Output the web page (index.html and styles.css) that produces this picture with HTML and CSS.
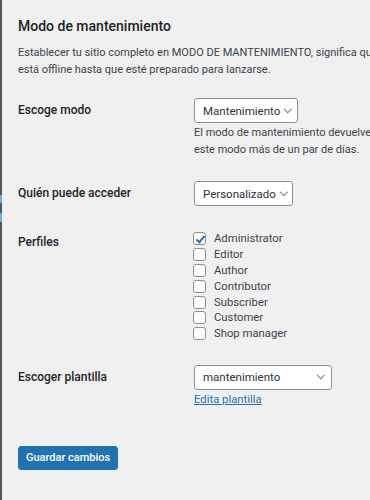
FILE: index.html
```html
<!DOCTYPE html>
<html lang="es">
<head>
    <meta charset="UTF-8">
    <title>Modo de mantenimiento</title>
    <link rel="stylesheet" href="styles.css">
</head>
<body>
    <div class="edge"></div>

    <div class="wrap">
        <h2>Modo de mantenimiento</h2>
        <p class="intro">Establecer tu sitio completo en MODO DE MANTENIMIENTO, significa que el sitio<br>está offline hasta que esté preparado para lanzarse.</p>

        <form class="settings">
            <div class="row">
                <label class="row-label">Escoge modo</label>
                <div class="row-field">
                    <div class="select">Mantenimiento <span class="chevron"></span></div>
                    <p class="description">El modo de mantenimiento devuelve un código 503, no es recomendable usar<br>este modo más de un par de días.</p>
                </div>
            </div>

            <div class="row">
                <label class="row-label">Quién puede acceder</label>
                <div class="row-field">
                    <div class="select">Personalizado <span class="chevron"></span></div>
                </div>
            </div>

            <div class="row row-roles">
                <label class="row-label">Perfiles</label>
                <div class="row-field">
                    <ul class="roles">
                        <li><span class="check checked"></span>Administrator</li>
                        <li><span class="check"></span>Editor</li>
                        <li><span class="check"></span>Author</li>
                        <li><span class="check"></span>Contributor</li>
                        <li><span class="check"></span>Subscriber</li>
                        <li><span class="check"></span>Customer</li>
                        <li><span class="check"></span>Shop manager</li>
                    </ul>
                </div>
            </div>

            <div class="row">
                <label class="row-label">Escoger plantilla</label>
                <div class="row-field">
                    <div class="select select-wide">mantenimiento <span class="chevron"></span></div>
                    <a href="#" class="edit-link">Edita plantilla</a>
                </div>
            </div>
        </form>

        <button class="button-primary">Guardar cambios</button>
    </div>
</body>
</html>
```

FILE: styles.css
```css
html, body {
    margin: 0;
    padding: 0;
    height: 100%;
    overflow: hidden;
}
body {
    display: flex;
    background-color: #f0f0f1;
    font-family: 'Roboto', 'Liberation Sans', sans-serif;
    font-size: 11px;
    color: #3c434a;
}
.edge {
    flex-shrink: 0;
    width: 2px;
    background: linear-gradient(#50575e 0, #50575e 195px, #72aee6 195px, #72aee6 203px,
        #50575e 203px, #50575e 213px, #72aee6 213px, #72aee6 222px, #50575e 222px);
}
.wrap {
    flex-shrink: 0;
    width: 620px;
    padding: 16px 16px 15px;
}
h2 {
    margin: 0;
    font-size: 14px;
    font-weight: 500;
    color: #1d2327;
    line-height: 20px;
}
.intro {
    margin: 8px 0 0;
    line-height: 17px;
    white-space: nowrap;
}
.settings {
    margin-top: 8px;
}
.row {
    display: grid;
    grid-template-columns: 176px 1fr;
    padding: 12px 0 11px;
}
.row-label {
    font-size: 12px;
    font-weight: 500;
    color: #1d2327;
    line-height: 24px;
}
.row-field {
    display: flex;
    flex-direction: column;
    align-items: flex-start;
}
.select {
    display: flex;
    align-items: center;
    gap: 5px;
    height: 23px;
    padding: 0 6px 0 8px;
    background-color: #fff;
    border: 1px solid #8c8f94;
    border-radius: 3px;
    color: #2c3338;
    font-size: 11.5px;
}
.select-wide {
    width: 120px;
    justify-content: space-between;
    padding-right: 8px;
}
.chevron {
    width: 4.5px;
    height: 4.5px;
    border-right: 1.2px solid #646970;
    border-bottom: 1.2px solid #646970;
    transform: translateY(-2px) rotate(45deg);
}
.description {
    margin: 1px 0 0;
    line-height: 17px;
    white-space: nowrap;
}
.row-roles .row-label {
    padding-top: 1px;
}
.roles {
    list-style: none;
    margin: 0;
    padding: 2px 0 0;
    font-size: 11.3px;
}
.roles li {
    display: flex;
    align-items: center;
    gap: 8px;
    height: 15.8px;
}
.check {
    box-sizing: border-box;
    width: 13px;
    height: 13px;
    margin-left: -1px;
    background-color: #fff;
    border: 1px solid #8c8f94;
    border-radius: 3px;
    position: relative;
}
.check.checked::after {
    content: "";
    position: absolute;
    left: 3.5px;
    top: 0.5px;
    width: 3px;
    height: 7px;
    border-right: 2px solid #2271b1;
    border-bottom: 2px solid #2271b1;
    transform: rotate(40deg);
}
.edit-link {
    margin-top: 1px;
    color: #2271b1;
    line-height: 17px;
    font-size: 11.3px;
}
.button-primary {
    margin-top: 27px;
    height: 24px;
    padding: 0 7px;
    background-color: #2271b1;
    border: 1px solid #2271b1;
    border-radius: 3px;
    color: #fff;
    font-family: inherit;
    font-size: 11px;
    font-weight: 500;
}
```
